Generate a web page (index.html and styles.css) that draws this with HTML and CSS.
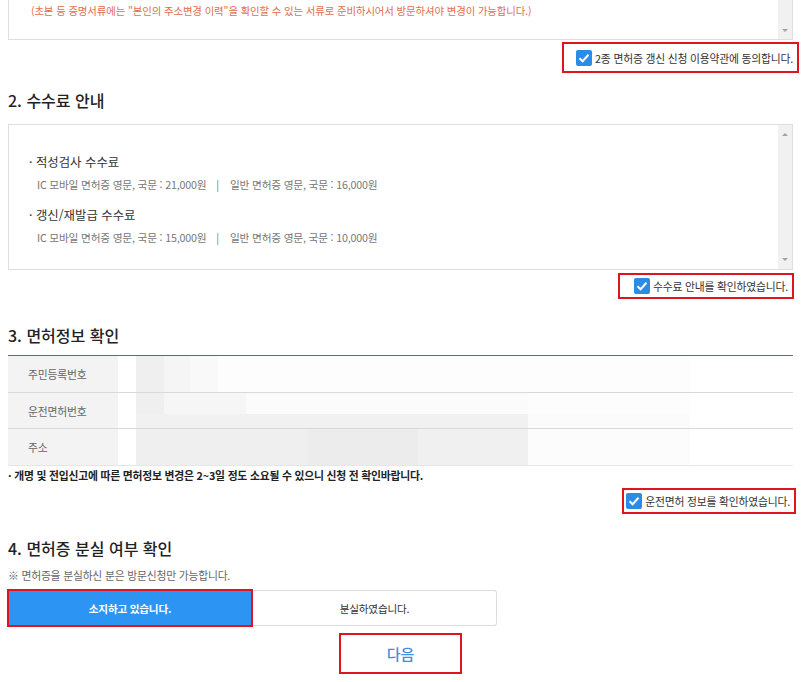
FILE: index.html
```html
<!DOCTYPE html>
<html lang="ko">
<head>
<meta charset="utf-8">
<title>면허증 갱신</title>
<link rel="stylesheet" href="styles.css">
</head>
<body>
<div class="page">
  <div class="scrollbox box-terms">
    <div class="scroll-content">
      <p class="warn">(초본 등 증명서류에는 "본인의 주소변경 이력"을 확인할 수 있는 서류로 준비하시어서 방문하셔야 변경이 가능합니다.)</p>
    </div>
    <div class="scrollbar scrollbar-end">
      <span class="arrow arrow-down"></span>
    </div>
  </div>
  <div class="agree-row">
    <label class="agree agree-1">
      <span class="check"><svg viewBox="0 0 16 16" width="16" height="16"><path d="M3.5 8.2 L6.6 11.2 L12.5 4.8" fill="none" stroke="#fff" stroke-width="2"/></svg></span>
      <span class="agree-text">2종 면허증 갱신 신청 이용약관에 동의합니다.</span>
    </label>
  </div>

  <h2 class="section-title title-2">2. 수수료 안내</h2>
  <div class="scrollbox box-fee">
    <div class="scroll-content fee-content">
      <p class="fee-item">· 적성검사 수수료</p>
      <p class="fee-detail">IC 모바일 면허증 영문, 국문 : 21,000원<span class="sep">|</span>일반 면허증 영문, 국문 : 16,000원</p>
      <p class="fee-item fee-item-2">· 갱신/재발급 수수료</p>
      <p class="fee-detail">IC 모바일 면허증 영문, 국문 : 15,000원<span class="sep">|</span>일반 면허증 영문, 국문 : 10,000원</p>
    </div>
    <div class="scrollbar">
      <span class="arrow arrow-up"></span>
      <span class="arrow arrow-down"></span>
    </div>
  </div>
  <div class="agree-row">
    <label class="agree agree-2">
      <span class="check"><svg viewBox="0 0 16 16" width="16" height="16"><path d="M3.5 8.2 L6.6 11.2 L12.5 4.8" fill="none" stroke="#fff" stroke-width="2"/></svg></span>
      <span class="agree-text">수수료 안내를 확인하였습니다.</span>
    </label>
  </div>

  <h2 class="section-title title-3">3. 면허정보 확인</h2>
  <table class="info-table">
    <tr class="row-1">
      <th>주민등록번호</th>
      <td><div class="blur blur-1"></div></td>
    </tr>
    <tr class="row-2">
      <th>운전면허번호</th>
      <td><div class="blur blur-2"></div></td>
    </tr>
    <tr class="row-3">
      <th>주소</th>
      <td><div class="blur blur-3"></div></td>
    </tr>
  </table>
  <p class="info-note">· 개명 및 전입신고에 따른 면허정보 변경은 2~3일 정도 소요될 수 있으니 신청 전 확인바랍니다.</p>
  <div class="agree-row">
    <label class="agree agree-3">
      <span class="check"><svg viewBox="0 0 16 16" width="16" height="16"><path d="M3.5 8.2 L6.6 11.2 L12.5 4.8" fill="none" stroke="#fff" stroke-width="2"/></svg></span>
      <span class="agree-text">운전면허 정보를 확인하였습니다.</span>
    </label>
  </div>

  <h2 class="section-title title-4">4. 면허증 분실 여부 확인</h2>
  <p class="lost-note">※ 면허증을 분실하신 분은 방문신청만 가능합니다.</p>
  <div class="choice">
    <button class="choice-btn active">소지하고 있습니다.</button>
    <button class="choice-btn">분실하였습니다.</button>
  </div>
  <div class="next-wrap">
    <button class="next-btn">다음</button>
  </div>
</div>
</body>
</html>
```

FILE: styles.css
```css
* { box-sizing: border-box; }
html, body { margin: 0; padding: 0; background: #fff; }
body {
  font-family: "Noto Sans CJK KR", "Noto Sans", sans-serif;
  color: #333;
  width: 801px;
  height: 682px;
  overflow: hidden;
}
p { margin: 0; }
.page { padding: 0 8px; }

.scrollbox {
  display: flex;
  border: 1px solid #dedede;
  background: #fff;
}
.box-terms { height: 40px; border-top: none; }
.box-fee { height: 146px; margin-top: 14px; }
.scroll-content { flex: 1; }
.scrollbar {
  width: 14px;
  background: #f1f1f1;
  display: flex;
  flex-direction: column;
  justify-content: space-between;
  align-items: center;
  padding: 8px 0;
}
.scrollbar-end { justify-content: flex-end; padding-bottom: 7px; }
.arrow { width: 0; height: 0; border-left: 3px solid transparent; border-right: 3px solid transparent; }
.arrow-up { border-bottom: 3px solid #a3a3a3; }
.arrow-down { border-top: 3px solid #a3a3a3; }

.warn {
  padding: 3px 0 0 22px;
  font-size: 10.4px;
  line-height: 16px;
  color: #e26c50;
  letter-spacing: -0.1px;
  white-space: nowrap;
}

.agree-row { display: flex; justify-content: flex-end; }
.agree {
  display: flex;
  align-items: center;
  justify-content: flex-end;
  border: 2px solid #e0141e;
  padding-right: 4px;
  gap: 3px;
}
.agree-1 { width: 237px; height: 31px; margin-top: 2px; margin-right: -6px; }
.agree-2 { width: 176px; height: 26px; margin-top: 3px; margin-right: -1px; }
.agree-3 { width: 174px; height: 26px; margin-top: 6px; margin-right: -3px; }
.check {
  width: 16px; height: 16px;
  background: #2b8ce6;
  border-radius: 2px;
  display: block;
}
.check svg { display: block; }
.agree-text { font-size: 10.8px; color: #333; white-space: nowrap; letter-spacing: -0.2px; }

.section-title {
  margin: 0;
  font-size: 16px;
  line-height: 20px;
  font-weight: 500;
  color: #222;
}
.title-2 { margin-top: 17px; }
.title-3 { margin-top: 26px; }
.title-4 { margin-top: 24px; }

.fee-content { padding: 29px 0 0 20px; }
.fee-item { font-size: 12.4px; line-height: 16px; color: #333; }
.fee-item-2 { margin-top: 14px; }
.fee-detail {
  font-size: 10.7px;
  line-height: 16px;
  color: #777;
  padding-left: 8px;
  margin-top: 7px;
  letter-spacing: -0.2px;
}
.sep { display: inline-block; margin: 0 11px 0 10px; }

.info-table {
  width: 100%;
  margin-top: 10px;
  border-collapse: collapse;
  border-top: 1px solid #5d7070;
}
.info-table th {
  width: 110px;
  background: #f3f3f3;
  font-weight: normal;
  font-size: 10.8px;
  color: #666;
  text-align: left;
  padding: 0 0 0 20px;
  border-bottom: 1px solid #d9d9d9;
  letter-spacing: -0.2px;
}
.info-table td { padding: 0; border-bottom: 1px solid #d9d9d9; }
.row-1 th, .row-1 td { height: 37px; }
.row-2 th, .row-2 td { height: 36px; }
.row-3 th, .row-3 td { height: 37px; }
.row-3 th, .row-3 td { border-bottom: 1px solid #e6e6e6; }
.blur { height: 100%; width: 572px; }
.blur-1 {
  background: linear-gradient(90deg, #fff 0 18px, #efefef 18px 46px, #f5f5f5 46px 72px, #f9f9f9 72px 100px, #fdfdfd 100px 572px);
}
.blur-2 {
  background:
    linear-gradient(90deg, #fff 0 18px, #efefef 18px 46px, #f6f6f6 46px 128px, #fbfbfb 128px 410px, #fdfdfd 410px 572px) 0 0 / 100% 60% no-repeat,
    linear-gradient(90deg, #fff 0 18px, #f1f1f1 18px 410px, #fbfbfb 410px 572px) 0 100% / 100% 40% no-repeat;
}
.blur-3 {
  background: linear-gradient(90deg, #fff 0 18px, #efefef 18px 190px, #ececec 190px 300px, #f0f0f0 300px 410px, #fcfcfc 410px 572px);
}

.info-note {
  margin-top: 2px;
  font-size: 10.8px;
  line-height: 14px;
  font-weight: bold;
  color: #222;
  letter-spacing: -0.2px;
  white-space: nowrap;
}

.lost-note {
  margin-top: 10px;
  font-size: 10.8px;
  line-height: 14px;
  color: #666;
  letter-spacing: -0.2px;
}

.choice { display: flex; margin-top: 7px; margin-left: -1px; width: 490px; }
.choice-btn {
  font-family: inherit;
  flex: 0 0 auto;
  height: 38px;
  font-size: 10.6px;
  letter-spacing: -0.2px;
  cursor: pointer;
}
.choice-btn.active {
  width: 246px;
  background: #2c95f4;
  color: #fff;
  font-weight: bold;
  border: 2px solid #e0141e;
}
.choice-btn:not(.active) {
  width: 244px;
  margin-top: 1px;
  height: 36px;
  background: #fff;
  color: #333;
  border: 1px solid #dcdcdc;
  border-left: none;
  border-radius: 0 3px 3px 0;
}

.next-wrap { display: flex; margin-top: 6px; padding-left: 331px; }
.next-btn {
  width: 123px;
  height: 41px;
  background: #fff;
  border: 2px solid #e0141e;
  color: #3f8fdc;
  font-family: inherit;
  font-size: 15px;
  font-weight: 500;
}
```
